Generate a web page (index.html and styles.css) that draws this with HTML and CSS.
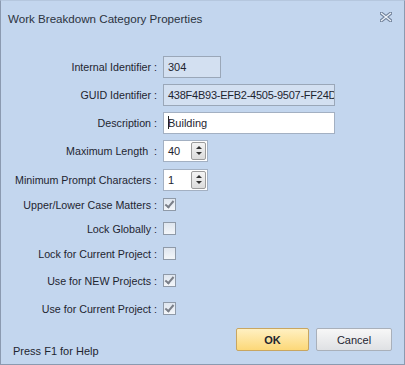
FILE: index.html
```html
<!DOCTYPE html>
<html lang="en">
<head>
    <meta charset="UTF-8">
    <title>Work Breakdown Category Properties</title>
    <link rel="stylesheet" href="styles.css">
</head>
<body>
    <div class="dialog">
        <div class="titlebar">
            <span class="title">Work Breakdown Category Properties</span>
            <svg class="close" width="12" height="10" viewBox="0 0 12 10">
                <path d="M1 1 L11 9 M11 1 L1 9" stroke="#73849c" stroke-width="3.4" stroke-linecap="square"/>
                <path d="M1 1 L11 9 M11 1 L1 9" stroke="#eef3fa" stroke-width="1.2"/>
            </svg>
        </div>

        <div class="form">
            <div class="row r1">
                <label>Internal Identifier :</label>
                <div class="field readonly short">304</div>
            </div>
            <div class="row r2">
                <label>GUID Identifier :</label>
                <div class="field readonly wide guid">438F4B93-EFB2-4505-9507-FF24D</div>
            </div>
            <div class="row r3">
                <label>Description :</label>
                <div class="field wide"><span class="caret"></span>Building</div>
            </div>
            <div class="row r4">
                <label>Maximum Length&nbsp; :</label>
                <div class="spin">
                    <span class="value">40</span>
                    <span class="spin-btn"><i class="up"></i><i class="down"></i></span>
                </div>
            </div>
            <div class="row r5">
                <label>Minimum Prompt Characters :</label>
                <div class="spin">
                    <span class="value">1</span>
                    <span class="spin-btn"><i class="up"></i><i class="down"></i></span>
                </div>
            </div>
            <div class="row r6">
                <label>Upper/Lower Case Matters :</label>
                <span class="check checked"></span>
            </div>
            <div class="row r7">
                <label>Lock Globally :</label>
                <span class="check"></span>
            </div>
            <div class="row r8">
                <label>Lock for Current Project :</label>
                <span class="check"></span>
            </div>
            <div class="row r9">
                <label>Use for NEW Projects :</label>
                <span class="check checked"></span>
            </div>
            <div class="row r10">
                <label>Use for Current Project :</label>
                <span class="check checked"></span>
            </div>
        </div>

        <div class="footer">
            <span class="help">Press F1 for Help</span>
            <div class="buttons">
                <button class="btn ok">OK</button>
                <button class="btn cancel">Cancel</button>
            </div>
        </div>
    </div>
</body>
</html>
```

FILE: styles.css
```css
html, body {
    margin: 0;
    padding: 0;
}
body {
    width: 405px;
    height: 365px;
    font-family: "Liberation Sans", Arial, sans-serif;
    font-size: 11px;
    color: #1e2530;
}
.dialog {
    box-sizing: border-box;
    width: 405px;
    height: 365px;
    background: #c3d6ee;
    border: 1px solid #8b9ab0;
    border-top-color: #b5c7de;
    display: flex;
    flex-direction: column;
}
.titlebar {
    height: 34px;
    display: flex;
    align-items: center;
    justify-content: space-between;
    padding: 0 12px 2px 7px;
}
.title {
    font-size: 11.6px;
    color: #2b3340;
}
.close {
    margin-top: -3px;
}
.form {
    display: flex;
    flex-direction: column;
    padding-top: 19px;
}
.row {
    display: flex;
    align-items: center;
    height: 21px;
}
.row label {
    width: 156px;
    text-align: right;
    margin-right: 6px;
    white-space: nowrap;
    font-size: 10.7px;
}
.r2, .r3 { margin-top: 7px; }
.r4 { margin-top: 7px; }
.r5 { margin-top: 8px; }
.r6 { margin-top: 4px; }
.r7 { margin-top: 3px; }
.r8 { margin-top: 4px; }
.r9 { margin-top: 6px; }
.r10 { margin-top: 7px; }
.field {
    box-sizing: border-box;
    height: 22px;
    border: 1px solid #a3b0c2;
    background: #fff;
    padding: 0 4px;
    line-height: 20px;
    white-space: nowrap;
    overflow: hidden;
    position: relative;
}
.readonly {
    background: #d3e0f1;
    border-color: #9aa7b8;
}
.guid {
    letter-spacing: -0.25px;
    padding-right: 0;
}
.short { width: 58px; }
.wide { width: 172px; }
.caret {
    display: inline-block;
    width: 1px;
    height: 13px;
    background: #222;
    vertical-align: -2px;
    margin-right: -1px;
}
.spin {
    box-sizing: border-box;
    width: 45px;
    height: 22px;
    border: 1px solid #a3b0c2;
    background: #fff;
    display: flex;
    align-items: center;
    justify-content: space-between;
    padding: 1px 1px 1px 4px;
}
.spin-btn {
    box-sizing: border-box;
    width: 15px;
    height: 18px;
    border: 1px solid #9c9c9c;
    border-radius: 2px;
    background: linear-gradient(#f4f4f4, #dcdcdc);
    display: flex;
    flex-direction: column;
    align-items: center;
    justify-content: space-around;
    padding: 2px 0;
}
.spin-btn i {
    width: 0;
    height: 0;
    border-left: 3px solid transparent;
    border-right: 3px solid transparent;
}
.spin-btn .up { border-bottom: 3px solid #333; }
.spin-btn .down { border-top: 3px solid #333; }
.check {
    box-sizing: border-box;
    width: 13px;
    height: 13px;
    border: 1px solid #8f9aa8;
    background: linear-gradient(#dfe6ef, #f3f6f9);
    position: relative;
}
.check.checked::after {
    content: "";
    position: absolute;
    left: 3px;
    top: 0px;
    width: 3px;
    height: 7px;
    border-right: 2px solid #7a7f88;
    border-bottom: 2px solid #7a7f88;
    transform: rotate(40deg);
}
.footer {
    margin-top: auto;
    display: flex;
    justify-content: space-between;
    align-items: flex-end;
    padding: 0 12px 5px 12px;
}
.help {
    padding-bottom: 2px;
}
.buttons {
    display: flex;
    gap: 7px;
    margin-bottom: 8px;
}
.btn {
    box-sizing: border-box;
    height: 23px;
    font-family: "Liberation Sans", Arial, sans-serif;
    font-size: 11px;
    color: #1e2530;
    border-radius: 2px;
    padding: 0;
}
.ok {
    width: 73px;
    font-weight: bold;
    border: 1px solid #c8a661;
    background: linear-gradient(#fff0c2, #fcd878);
}
.cancel {
    width: 76px;
    border: 1px solid #a9b0ba;
    background: linear-gradient(#f7f7f7, #dfe1e4);
}
```
